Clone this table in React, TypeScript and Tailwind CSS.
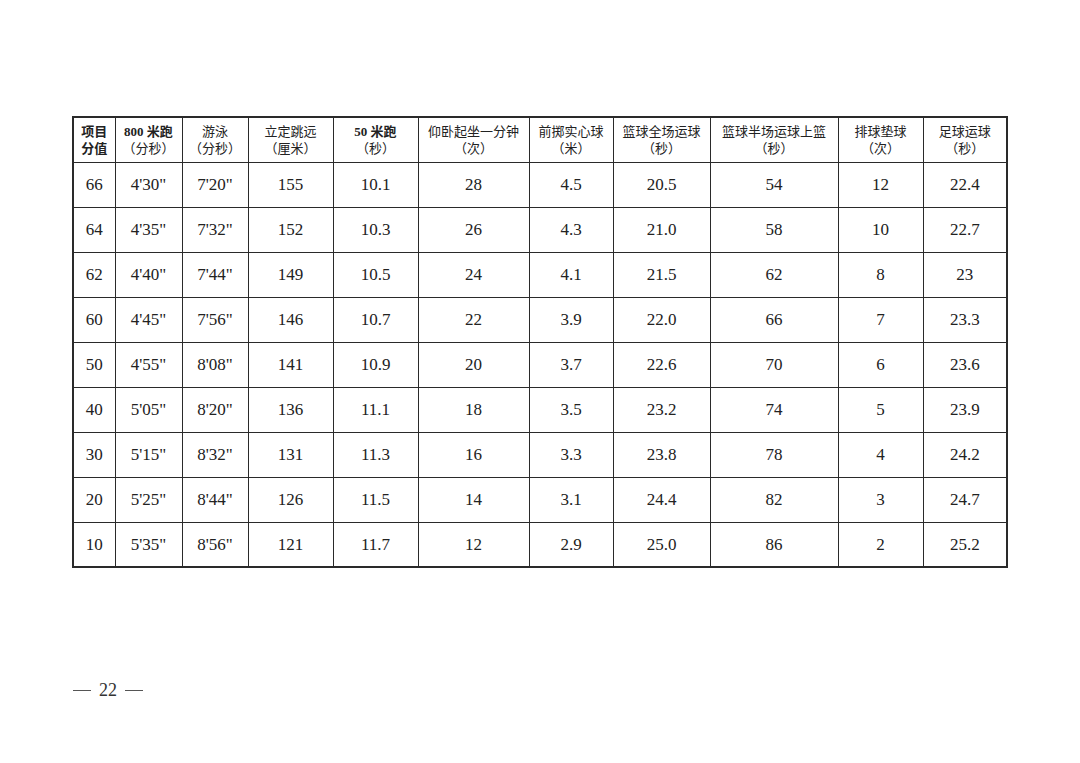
import React from 'react';

const headers: [string, string][] = [
  ['项目', '分值'],
  ['800 米跑', '（分秒）'],
  ['游泳', '（分秒）'],
  ['立定跳远', '（厘米）'],
  ['50 米跑', '（秒）'],
  ['仰卧起坐一分钟', '（次）'],
  ['前掷实心球', '（米）'],
  ['篮球全场运球', '（秒）'],
  ['篮球半场运球上篮', '（秒）'],
  ['排球垫球', '（次）'],
  ['足球运球', '（秒）'],
];

const widths = [42, 67, 66, 85, 85, 111, 84, 97, 128, 85, 84];

const rows: string[][] = [
  ['66', `4'30"`, `7'20"`, '155', '10.1', '28', '4.5', '20.5', '54', '12', '22.4'],
  ['64', `4'35"`, `7'32"`, '152', '10.3', '26', '4.3', '21.0', '58', '10', '22.7'],
  ['62', `4'40"`, `7'44"`, '149', '10.5', '24', '4.1', '21.5', '62', '8', '23'],
  ['60', `4'45"`, `7'56"`, '146', '10.7', '22', '3.9', '22.0', '66', '7', '23.3'],
  ['50', `4'55"`, `8'08"`, '141', '10.9', '20', '3.7', '22.6', '70', '6', '23.6'],
  ['40', `5'05"`, `8'20"`, '136', '11.1', '18', '3.5', '23.2', '74', '5', '23.9'],
  ['30', `5'15"`, `8'32"`, '131', '11.3', '16', '3.3', '23.8', '78', '4', '24.2'],
  ['20', `5'25"`, `8'44"`, '126', '11.5', '14', '3.1', '24.4', '82', '3', '24.7'],
  ['10', `5'35"`, `8'56"`, '121', '11.7', '12', '2.9', '25.0', '86', '2', '25.2'],
];

export default function App() {
  return (
    <div className="w-[1080px] h-[763px] bg-white relative overflow-hidden">
      <div className="pt-[116px] pl-[72px]">
        <table className="table-fixed border-collapse w-[935px] border-2 border-[#2a2a2a]">
          <colgroup>
            {widths.map((w, i) => (
              <col key={i} style={{ width: w }} />
            ))}
          </colgroup>
          <thead>
            <tr className="h-[45px]">
              {headers.map(([a, b], i) => (
                <th
                  key={i}
                  className="border-[1.5px] border-[#2a2a2a] p-0 text-center align-middle text-[13px] leading-[17px] font-normal text-[#222] font-['Liberation_Serif','Noto_Sans_CJK_SC',serif]"
                >
                  <div className={i === 1 || i === 4 || i === 0 ? 'font-bold' : ''}>{a}</div>
                  <div className={i === 0 ? 'font-bold' : ''}>{b}</div>
                </th>
              ))}
            </tr>
          </thead>
          <tbody>
            {rows.map((r, ri) => (
              <tr key={ri} className="h-[45px]">
                {r.map((c, ci) => (
                  <td
                    key={ci}
                    className="border-[1.5px] border-[#2a2a2a] p-0 text-center align-middle text-[17px] text-[#222] font-['Liberation_Serif',serif]"
                  >
                    {c}
                  </td>
                ))}
              </tr>
            ))}
          </tbody>
        </table>
      </div>
      <div className="pt-[109px] pl-[73px] text-[18px] text-[#333] font-['Liberation_Serif',serif] flex items-center gap-[8px]">
        <span className="inline-block w-[18px] h-px bg-[#555]" />
        <span>22</span>
        <span className="inline-block w-[18px] h-px bg-[#555]" />
      </div>
    </div>
  );
}
